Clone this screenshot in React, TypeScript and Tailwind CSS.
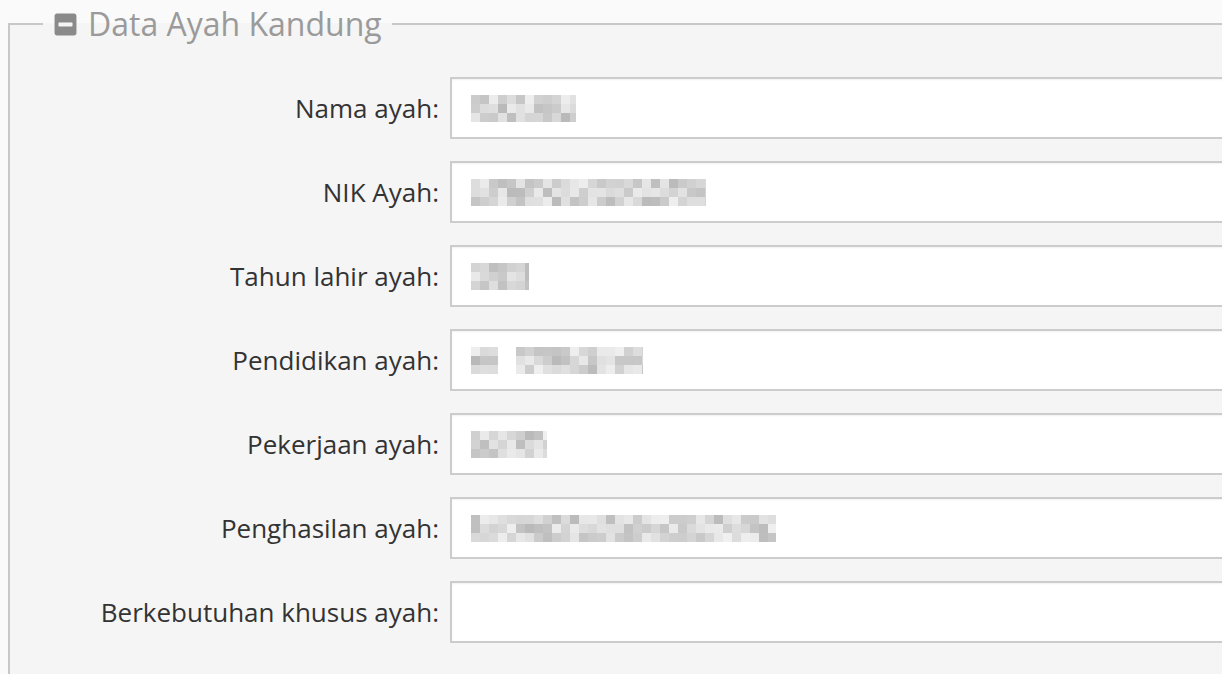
import { FaMinusSquare } from "react-icons/fa";

type Blur = { w: number; rows: number; seed: number; gap?: [number, number] };

const fields: { label: string; blur?: Blur }[] = [
  { label: "Nama ayah:", blur: { w: 105, rows: 3, seed: 3 } },
  { label: "NIK Ayah:", blur: { w: 235, rows: 3, seed: 11 } },
  { label: "Tahun lahir ayah:", blur: { w: 58, rows: 3, seed: 7 } },
  { label: "Pendidikan ayah:", blur: { w: 172, rows: 3, seed: 19, gap: [27, 43] } },
  { label: "Pekerjaan ayah:", blur: { w: 76, rows: 3, seed: 5 } },
  { label: "Penghasilan ayah:", blur: { w: 305, rows: 3, seed: 23 } },
  { label: "Berkebutuhan khusus ayah:" },
];

// pseudo-random shades to fake the pixelated (censored) values
const rand = (seed: number) => {
  let s = seed;
  return () => {
    s = (s * 9301 + 49297) % 233280;
    return s / 233280;
  };
};

const Pixelated = ({ w, rows, seed, gap }: Blur) => {
  const r = rand(seed);
  const cell = 9;
  const cols = Math.ceil(w / cell);
  return (
    <div className="flex flex-col overflow-hidden" style={{ width: w }}>
      {Array.from({ length: rows }).map((_, y) => (
        <div key={y} className="flex h-[9px] shrink-0">
          {Array.from({ length: cols }).map((_, x) => {
            const left = x * cell;
            const hidden = gap && left >= gap[0] && left < gap[1];
            const v = Math.round(185 + r() * 55);
            return (
              <div
                key={x}
                className="h-full w-[9px] shrink-0"
                style={{ background: hidden ? "transparent" : `rgb(${v},${v},${v})` }}
              />
            );
          })}
        </div>
      ))}
    </div>
  );
};

export default function App() {
  return (
    <div className="h-[674px] w-[1222px] overflow-hidden bg-[#fafafa] pt-[9px] font-['Open_Sans',sans-serif]">
      <fieldset className="ml-[8px] w-[1260px] h-[720px] border-2 border-[#c8c8c8] bg-[#f5f5f5] pt-[14px]">
        <legend className="ml-[33px] flex items-center gap-[10px] px-[10px] text-[32px] leading-[30px] text-[#9a9a9a]">
          <FaMinusSquare className="text-[25px] text-[#8a8a8a]" />
          Data Ayah Kandung
        </legend>
        <div className="flex flex-col gap-[22px] pt-[24px]">
          {fields.map((f) => (
            <div key={f.label} className="flex items-center">
              <label className="w-[440px] pr-[11px] text-right text-[26px] text-[#333]">
                {f.label}
              </label>
              <div className="flex h-[62px] flex-1 items-center border-2 border-[#cccccc] bg-white pl-[19px] shadow-[inset_0_1px_2px_rgba(0,0,0,0.06)]">
                {f.blur && <Pixelated {...f.blur} />}
              </div>
            </div>
          ))}
        </div>
      </fieldset>
    </div>
  );
}
